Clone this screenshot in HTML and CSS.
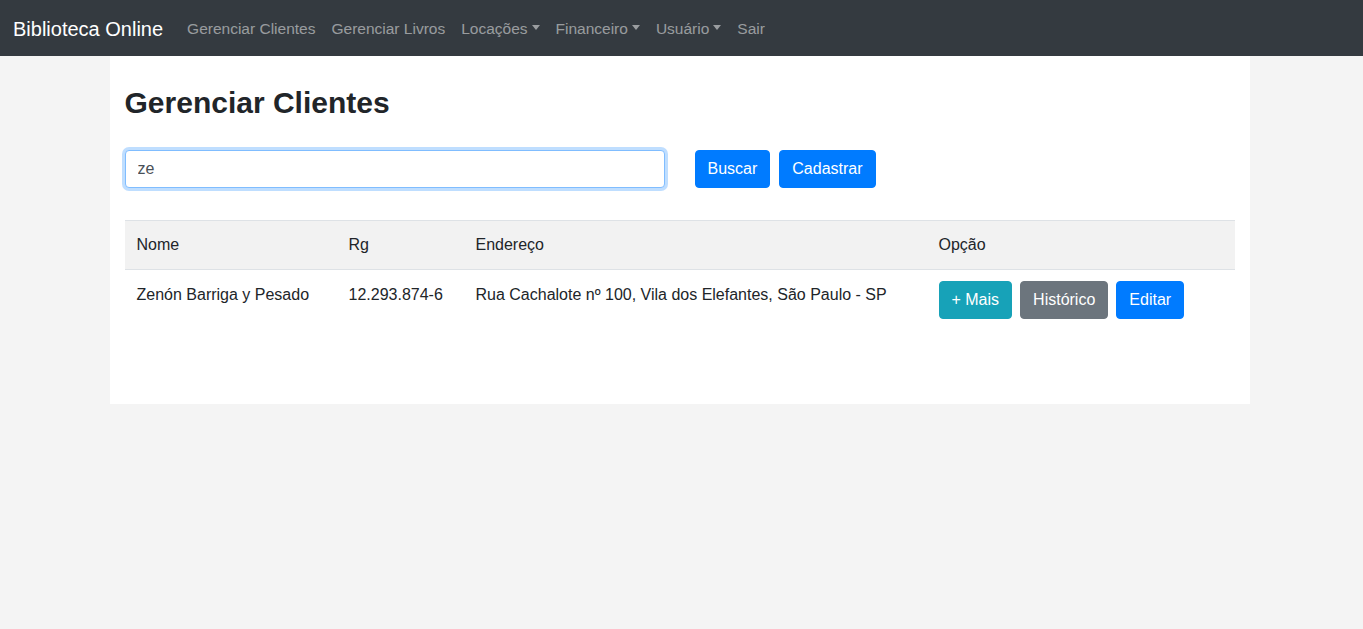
FILE: index.html
```html
<!DOCTYPE html>
<html lang="pt-br">
<head>
<meta charset="utf-8">
<title>Biblioteca Online</title>
<link rel="stylesheet" href="styles.css">
</head>
<body>
<nav class="navbar">
  <a class="brand" href="#">Biblioteca Online</a>
  <ul class="nav">
    <li><a class="nav-link" href="#">Gerenciar Clientes</a></li>
    <li><a class="nav-link" href="#">Gerenciar Livros</a></li>
    <li><a class="nav-link caret" href="#">Locações</a></li>
    <li><a class="nav-link caret" href="#">Financeiro</a></li>
    <li><a class="nav-link caret" href="#">Usuário</a></li>
    <li><a class="nav-link" href="#">Sair</a></li>
  </ul>
</nav>
<main class="container">
  <h2 class="title">Gerenciar Clientes</h2>
  <form class="search">
    <input class="input" type="text" value="ze">
    <div class="actions">
      <button type="button" class="btn btn-primary">Buscar</button>
      <button type="button" class="btn btn-primary">Cadastrar</button>
    </div>
  </form>
  <table class="table">
    <thead>
      <tr>
        <th class="c-nome">Nome</th>
        <th class="c-rg">Rg</th>
        <th class="c-end">Endereço</th>
        <th class="c-op">Opção</th>
      </tr>
    </thead>
    <tbody>
      <tr>
        <td>Zenón Barriga y Pesado</td>
        <td>12.293.874-6</td>
        <td>Rua Cachalote nº 100, Vila dos Elefantes, São Paulo - SP</td>
        <td class="ops">
          <button type="button" class="btn btn-info">+ Mais</button>
          <button type="button" class="btn btn-secondary">Histórico</button>
          <button type="button" class="btn btn-primary">Editar</button>
        </td>
      </tr>
    </tbody>
  </table>
</main>
</body>
</html>
```

FILE: styles.css
```css
* { box-sizing: border-box; }
html, body {
  margin: 0;
  padding: 0;
}
body {
  background: #f4f4f4;
  font-family: "Segoe UI", "Liberation Sans", Arial, sans-serif;
  font-size: 16px;
  line-height: 1.5;
  color: #212529;
}
.navbar {
  background: #343a40;
  display: flex;
  align-items: center;
  padding: 8px 16px 8px 13px;
  height: 56px;
}
.brand {
  color: #fff;
  font-size: 20px;
  line-height: 30px;
  padding: 6px 0 4px;
  margin-right: 16px;
  text-decoration: none;
  white-space: nowrap;
}
.nav {
  display: flex;
  list-style: none;
  margin: 0;
  padding: 0;
}
.nav-link {
  display: block;
  color: rgba(255, 255, 255, 0.5);
  font-size: 15.5px;
  text-decoration: none;
  padding: 9px 8px 7px;
  white-space: nowrap;
}
.caret::after {
  content: "";
  display: inline-block;
  margin-left: 4px;
  vertical-align: 4px;
  border-top: 5px solid;
  border-left: 4px solid transparent;
  border-right: 4px solid transparent;
  border-bottom: 0;
}
.container {
  width: 1140px;
  margin: 0 auto 0 calc(50% - 572px);
  background: #fff;
  padding: 29px 15px 72px;
}
.title {
  margin: 0 0 29px;
  font-size: 30px;
  font-weight: 700;
  line-height: 1.2;
}
.search {
  display: flex;
  align-items: center;
  margin-bottom: 32px;
}
.input {
  width: 540px;
  height: 38px;
  padding: 6px 12px;
  font: inherit;
  color: #495057;
  border: 1px solid #80bdff;
  border-radius: 4px;
  box-shadow: 0 0 0 3px rgba(0, 123, 255, 0.25);
  outline: none;
}
.actions {
  display: flex;
  gap: 9px;
  margin-left: 30px;
}
.btn {
  font: inherit;
  color: #fff;
  border: 1px solid transparent;
  border-radius: 4px;
  padding: 6px 12px;
  line-height: 24px;
  cursor: pointer;
}
.btn-primary { background: #007bff; border-color: #007bff; }
.btn-info { background: #17a2b8; border-color: #17a2b8; }
.btn-secondary { background: #6c757d; border-color: #6c757d; }
.table {
  width: 100%;
  border-collapse: collapse;
}
.table th {
  font-weight: 400;
  text-align: left;
  background: #f2f2f2;
  padding: 12px;
  border-top: 1px solid #dee2e6;
  border-bottom: 1px solid #dee2e6;
  vertical-align: bottom;
}
.table td {
  padding: 13px 12px 11px;
  vertical-align: top;
}
.table td.ops {
  padding: 11px 12px 13px;
}
.c-nome { width: 212px; }
.c-rg { width: 127px; }
.c-end { width: 463px; }
.ops {
  display: flex;
  gap: 8px;
}
```
